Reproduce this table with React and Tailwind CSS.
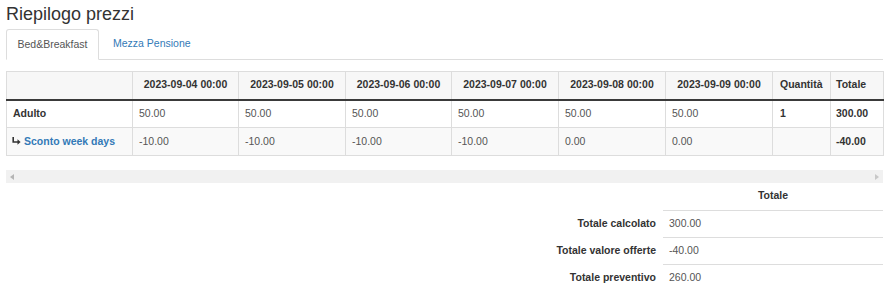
import React from 'react';

const dates = [
  '2023-09-04 00:00',
  '2023-09-05 00:00',
  '2023-09-06 00:00',
  '2023-09-07 00:00',
  '2023-09-08 00:00',
  '2023-09-09 00:00',
];

const rows = [
  { label: 'Adulto', values: ['50.00', '50.00', '50.00', '50.00', '50.00', '50.00'], qty: '1', total: '300.00' },
  { label: 'Sconto week days', offer: true, values: ['-10.00', '-10.00', '-10.00', '-10.00', '0.00', '0.00'], qty: '', total: '-40.00' },
];

const totals = [
  { label: 'Totale calcolato', value: '300.00' },
  { label: 'Totale valore offerte', value: '-40.00' },
  { label: 'Totale preventivo', value: '260.00' },
];

const HookArrow = () => (
  <svg width="9" height="8" viewBox="0 0 9 8" className="inline-block mr-[3px] align-[0px]">
    <path d="M1.2 0 V5 H6" stroke="#333" strokeWidth="1.6" fill="none" />
    <path d="M5.5 2.2 L8.6 5 L5.5 7.8 Z" fill="#333" />
  </svg>
);

const App = () => {
  return (
    <div
      className="w-[891px] h-[303px] bg-white text-[#333] overflow-hidden pl-[6px]"
      style={{ fontFamily: '"Liberation Sans", Arial, sans-serif' }}
    >
      <h4 className="text-[18px] leading-[20px] pt-[4px] h-[29px]">Riepilogo prezzi</h4>

      {/* tabs */}
      <div className="flex w-[877px] border-b border-[#ddd] h-[31px] text-[10.5px]">
        <div className="w-[93px] h-[31px] border border-[#ddd] border-b-white bg-white rounded-t-[3px] flex items-center justify-center text-[#555]">
          Bed&amp;Breakfast
        </div>
        <div className="px-[14px] flex items-center text-[#337ab7]">Mezza Pensione</div>
      </div>

      {/* price table */}
      <table className="mt-[11px] w-[877px] border-collapse border border-[#ddd] text-[10.5px] table-fixed">
        <colgroup>
          <col className="w-[126px]" />
          <col className="w-[106px]" />
          <col className="w-[107px]" />
          <col className="w-[106px]" />
          <col className="w-[107px]" />
          <col className="w-[107px]" />
          <col className="w-[107px]" />
          <col className="w-[58px]" />
          <col className="w-[53px]" />
        </colgroup>
        <thead>
          <tr className="h-[28px] bg-[#f7f7f7]">
            <th className="border border-[#ddd] border-b-2 border-b-[#3a3a3a]"></th>
            {dates.map((d) => (
              <th key={d} className="border border-[#ddd] border-b-2 border-b-[#3a3a3a] font-bold text-center">
                {d}
              </th>
            ))}
            <th className="border border-[#ddd] border-b-2 border-b-[#3a3a3a] font-bold text-left pl-[7px]">Quantità</th>
            <th className="border border-[#ddd] border-b-2 border-b-[#3a3a3a] font-bold text-left pl-[5px]">Totale</th>
          </tr>
        </thead>
        <tbody>
          {rows.map((r, i) => (
            <tr key={r.label} className={i % 2 === 1 ? 'h-[28px] bg-[#f9f9f9]' : 'h-[28px] bg-white'}>
              <td className="border border-[#ddd] pl-[5px] font-bold">
                {r.offer ? (
                  <span className="text-[#337ab7]">
                    <HookArrow />
                    {r.label}
                  </span>
                ) : (
                  <span className="pl-[1px]">{r.label}</span>
                )}
              </td>
              {r.values.map((v, j) => (
                <td key={j} className="border border-[#ddd] pl-[6px] text-[#555]">
                  {v}
                </td>
              ))}
              <td className="border border-[#ddd] pl-[7px] font-bold">{r.qty}</td>
              <td className="border border-[#ddd] pl-[5px] font-bold">{r.total}</td>
            </tr>
          ))}
        </tbody>
      </table>

      {/* horizontal scrollbar */}
      <div className="mt-[14px] w-[877px] h-[13px] bg-[#f1f1f1] flex items-center justify-between px-[4px]">
        <svg width="4" height="6" viewBox="0 0 4 6">
          <path d="M4 0 L0 3 L4 6 Z" fill="#b5b5b5" />
        </svg>
        <svg width="4" height="6" viewBox="0 0 4 6">
          <path d="M0 0 L4 3 L0 6 Z" fill="#c8c8c8" />
        </svg>
      </div>

      {/* totals */}
      <table className="w-[877px] border-collapse text-[10.5px]">
        <colgroup>
          <col className="w-[657px]" />
          <col className="w-[220px]" />
        </colgroup>
        <thead>
          <tr className="h-[27px]">
            <th></th>
            <th className="font-bold text-center border-b border-[#ddd]">Totale</th>
          </tr>
        </thead>
        <tbody>
          {totals.map((t, i) => (
            <tr key={t.label} className="h-[27px]">
              <th className="font-bold text-right pr-[7px]">{t.label}</th>
              <td className={i < totals.length - 1 ? 'pl-[6px] text-[#555] border-b border-[#ddd]' : 'pl-[6px] text-[#555]'}>
                {t.value}
              </td>
            </tr>
          ))}
        </tbody>
      </table>
    </div>
  );
};

export default App;
